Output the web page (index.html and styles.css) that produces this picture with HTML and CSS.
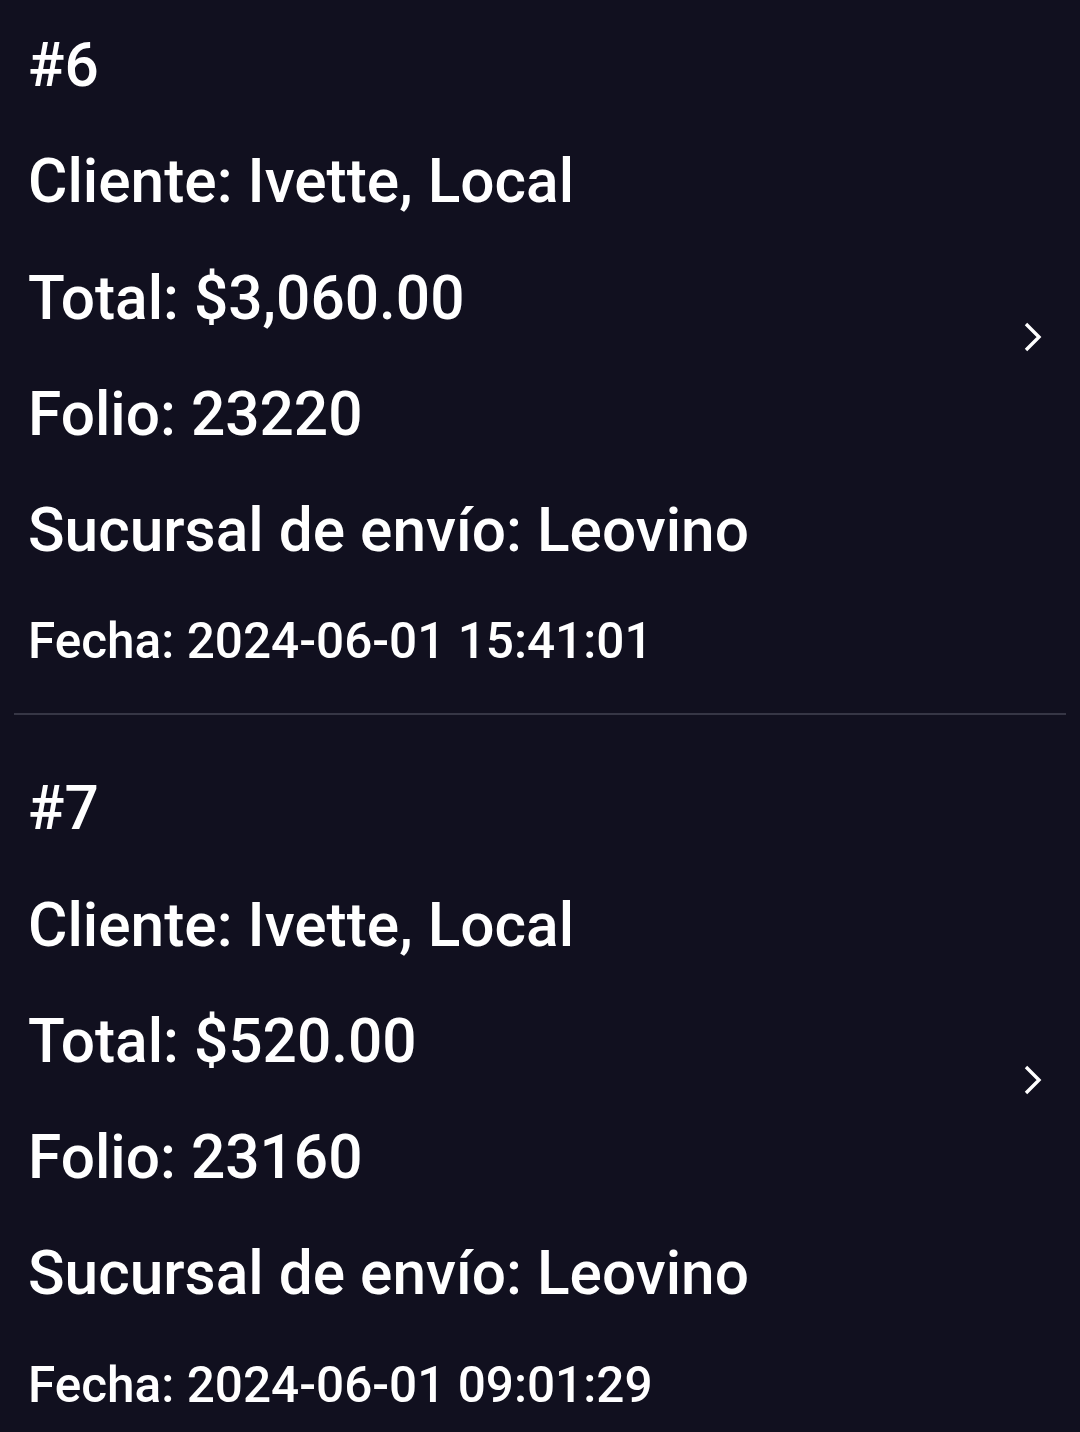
FILE: index.html
```html
<!DOCTYPE html>
<html lang="es">
<head>
    <meta charset="utf-8">
    <title>Pedidos</title>
    <link rel="stylesheet" href="styles.css">
</head>
<body>
    <div class="order-list">
        <div class="order">
            <div class="order-info">
                <p class="line">#6</p>
                <p class="line">Cliente: Ivette, Local</p>
                <p class="line">Total: $3,060.00</p>
                <p class="line">Folio: 23220</p>
                <p class="line">Sucursal de envío: Leovino</p>
                <p class="date">Fecha: 2024-06-01 15:41:01</p>
            </div>
            <svg class="arrow" viewBox="0 0 24 32"><polyline points="4,3 17,16 4,29"/></svg>
        </div>
        <hr class="divider">
        <div class="order">
            <div class="order-info">
                <p class="line">#7</p>
                <p class="line">Cliente: Ivette, Local</p>
                <p class="line">Total: $520.00</p>
                <p class="line">Folio: 23160</p>
                <p class="line">Sucursal de envío: Leovino</p>
                <p class="date">Fecha: 2024-06-01 09:01:29</p>
            </div>
            <svg class="arrow" viewBox="0 0 24 32"><polyline points="4,3 17,16 4,29"/></svg>
        </div>
        <hr class="divider">
    </div>
</body>
</html>
```

FILE: styles.css
```css
body {
    margin: 0;
    background-color: #11101f;
    color: #ffffff;
    font-family: Roboto, "Noto Sans", sans-serif;
    font-weight: 500;
}

/* list is scrolled a little past the top */
.order-list {
    margin-top: -28px;
}

.order {
    display: flex;
    align-items: center;
    padding: 36px 34px 19px 28px;
}

.order-info {
    flex: 1;
}

.line {
    margin: 0;
    font-size: 60.4px;
    line-height: 116.25px;
}

.date {
    margin: 0;
    font-size: 49.5px;
    line-height: 105px;
}

.arrow {
    width: 24px;
    height: 32px;
    fill: none;
    stroke: #ffffff;
    stroke-width: 3.4;
    margin-bottom: 29px;
}

.divider {
    margin: 0 14px;
    border: none;
    height: 2px;
    background-color: #363645;
}
```
